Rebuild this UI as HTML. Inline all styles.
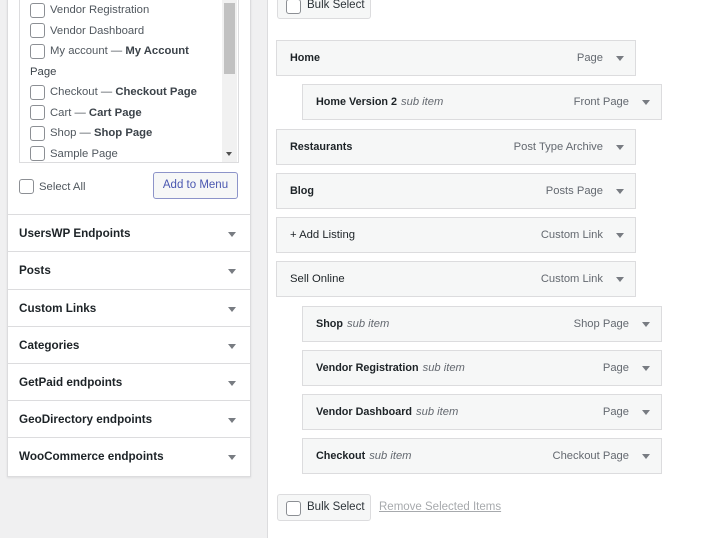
<!DOCTYPE html>
<html><head><style>
body{margin:0;width:720px;height:538px;background:#f0f0f1;font-family:"Liberation Sans",sans-serif;color:#3c434a;position:relative;overflow:hidden;font-size:11.5px}
.abs{position:absolute}
.cb{position:absolute;width:13px;height:13px;border:1px solid #8c8f94;border-radius:3px;background:#fff}
.panel{left:7px;top:-2px;width:242px;height:477px;background:#fff;border:1px solid #dcdcde;box-shadow:0 1px 2px rgba(0,0,0,.08)}
.list{left:19px;top:-2px;width:218px;height:164px;border:1px solid #dcdcde;border-top:none;background:#fff}
.li{position:absolute;left:30px;font-size:11.3px;color:#50575e}
.li b{color:#3c434a}
.acc{position:absolute;left:7px;width:243px;height:37px;border-top:1px solid #dcdcde;font-weight:bold;font-size:11.7px;color:#1d2327;line-height:37px}
.acc span{position:absolute;left:12px}
.arr{position:absolute;width:0;height:0;border-left:4px solid transparent;border-right:4px solid transparent;border-top:5px solid #787c82}
.right{left:267px;top:0;width:453px;height:538px;background:#fff;border-left:1px solid #dcdcde}
.it{position:absolute;height:34px;background:#f6f7f7;border:1px solid #dcdcde;line-height:34px;font-size:11.2px}
.it .t{position:absolute;left:13px;font-weight:bold;color:#1d2327;font-size:10.8px}
.it .t i{font-weight:normal;color:#646970;margin-left:4px;font-size:11.2px}
.it .ty{position:absolute;right:32px;color:#646970}
.it .arr{right:11px;top:15px}
.btn{position:absolute;height:25px;background:#f6f7f7;border:1px solid #dcdcde;border-radius:3px;font-size:11.5px;line-height:25px;color:#2c3338}
</style></head><body>
<div class="abs panel"></div>
<div class="abs list"></div>
<div class="abs" style="left:222px;top:0;width:15px;height:162px;background:#f1f1f1"></div>
<div class="abs" style="left:224px;top:3px;width:11px;height:71px;background:#c1c1c1"></div>
<div class="arr" style="left:226px;top:152px;border-top-color:#505050;border-width:4px 3px 0 3px"></div>
<div class="cb" style="left:30px;top:3px"></div><div class="li" style="left:50px;top:4px">Vendor Registration</div>
<div class="cb" style="left:30px;top:23px"></div><div class="li" style="left:50px;top:25px">Vendor Dashboard</div>
<div class="cb" style="left:30px;top:44px"></div><div class="li" style="left:50px;top:45px">My account — <b>My Account</b></div>
<div class="li" style="left:30px;top:66px;color:#3c434a">Page</div>
<div class="cb" style="left:30px;top:85px"></div><div class="li" style="left:50px;top:86px">Checkout — <b>Checkout Page</b></div>
<div class="cb" style="left:30px;top:105px"></div><div class="li" style="left:50px;top:107px">Cart — <b>Cart Page</b></div>
<div class="cb" style="left:30px;top:126px"></div><div class="li" style="left:50px;top:127px">Shop — <b>Shop Page</b></div>
<div class="cb" style="left:30px;top:146px"></div><div class="li" style="left:50px;top:148px">Sample Page</div>
<div class="cb" style="left:19px;top:179px"></div><div class="li" style="left:39px;top:181px">Select All</div>
<div class="btn" style="left:153px;top:172px;width:83px;border-color:#8d94c9;background:#f6f7f7;color:#4a57b0;text-align:center">Add to Menu</div>
<div class="acc" style="top:214px"><span>UsersWP Endpoints</span><div class="arr" style="left:221px;top:17px"></div></div>
<div class="acc" style="top:251px"><span>Posts</span><div class="arr" style="left:221px;top:17px"></div></div>
<div class="acc" style="top:289px"><span>Custom Links</span><div class="arr" style="left:221px;top:17px"></div></div>
<div class="acc" style="top:326px"><span>Categories</span><div class="arr" style="left:221px;top:17px"></div></div>
<div class="acc" style="top:363px"><span>GetPaid endpoints</span><div class="arr" style="left:221px;top:17px"></div></div>
<div class="acc" style="top:400px"><span>GeoDirectory endpoints</span><div class="arr" style="left:221px;top:17px"></div></div>
<div class="acc" style="top:437px"><span>WooCommerce endpoints</span><div class="arr" style="left:221px;top:17px"></div></div>
<div class="abs right"></div>
<div class="btn" style="left:277px;top:-8px;width:92px;"><div class="cb" style="left:8px;top:6px"></div><span style="position:absolute;left:29px">Bulk Select</span></div>
<div class="it" style="left:276px;top:40px;width:358px"><span class="t">Home</span><span class="ty">Page</span><div class="arr"></div></div>
<div class="it" style="left:302px;top:84px;width:358px"><span class="t">Home Version 2<i>sub item</i></span><span class="ty">Front Page</span><div class="arr"></div></div>
<div class="it" style="left:276px;top:129px;width:358px"><span class="t">Restaurants</span><span class="ty">Post Type Archive</span><div class="arr"></div></div>
<div class="it" style="left:276px;top:173px;width:358px"><span class="t">Blog</span><span class="ty">Posts Page</span><div class="arr"></div></div>
<div class="it" style="left:276px;top:217px;width:358px"><span class="t" style="font-weight:normal;color:#1d2327;font-size:11.3px">+ Add Listing</span><span class="ty">Custom Link</span><div class="arr"></div></div>
<div class="it" style="left:276px;top:261px;width:358px"><span class="t" style="font-weight:normal;color:#1d2327;font-size:11.3px">Sell Online</span><span class="ty">Custom Link</span><div class="arr"></div></div>
<div class="it" style="left:302px;top:306px;width:358px"><span class="t">Shop<i>sub item</i></span><span class="ty">Shop Page</span><div class="arr"></div></div>
<div class="it" style="left:302px;top:350px;width:358px"><span class="t">Vendor Registration<i>sub item</i></span><span class="ty">Page</span><div class="arr"></div></div>
<div class="it" style="left:302px;top:394px;width:358px"><span class="t">Vendor Dashboard<i>sub item</i></span><span class="ty">Page</span><div class="arr"></div></div>
<div class="it" style="left:302px;top:438px;width:358px"><span class="t">Checkout<i>sub item</i></span><span class="ty">Checkout Page</span><div class="arr"></div></div>
<div class="btn" style="left:277px;top:494px;width:92px;"><div class="cb" style="left:8px;top:6px"></div><span style="position:absolute;left:29px">Bulk Select</span></div>
<div class="abs" style="left:379px;top:501px;font-size:11.5px;color:#a7aaad;text-decoration:underline">Remove Selected Items</div>
</body></html>
